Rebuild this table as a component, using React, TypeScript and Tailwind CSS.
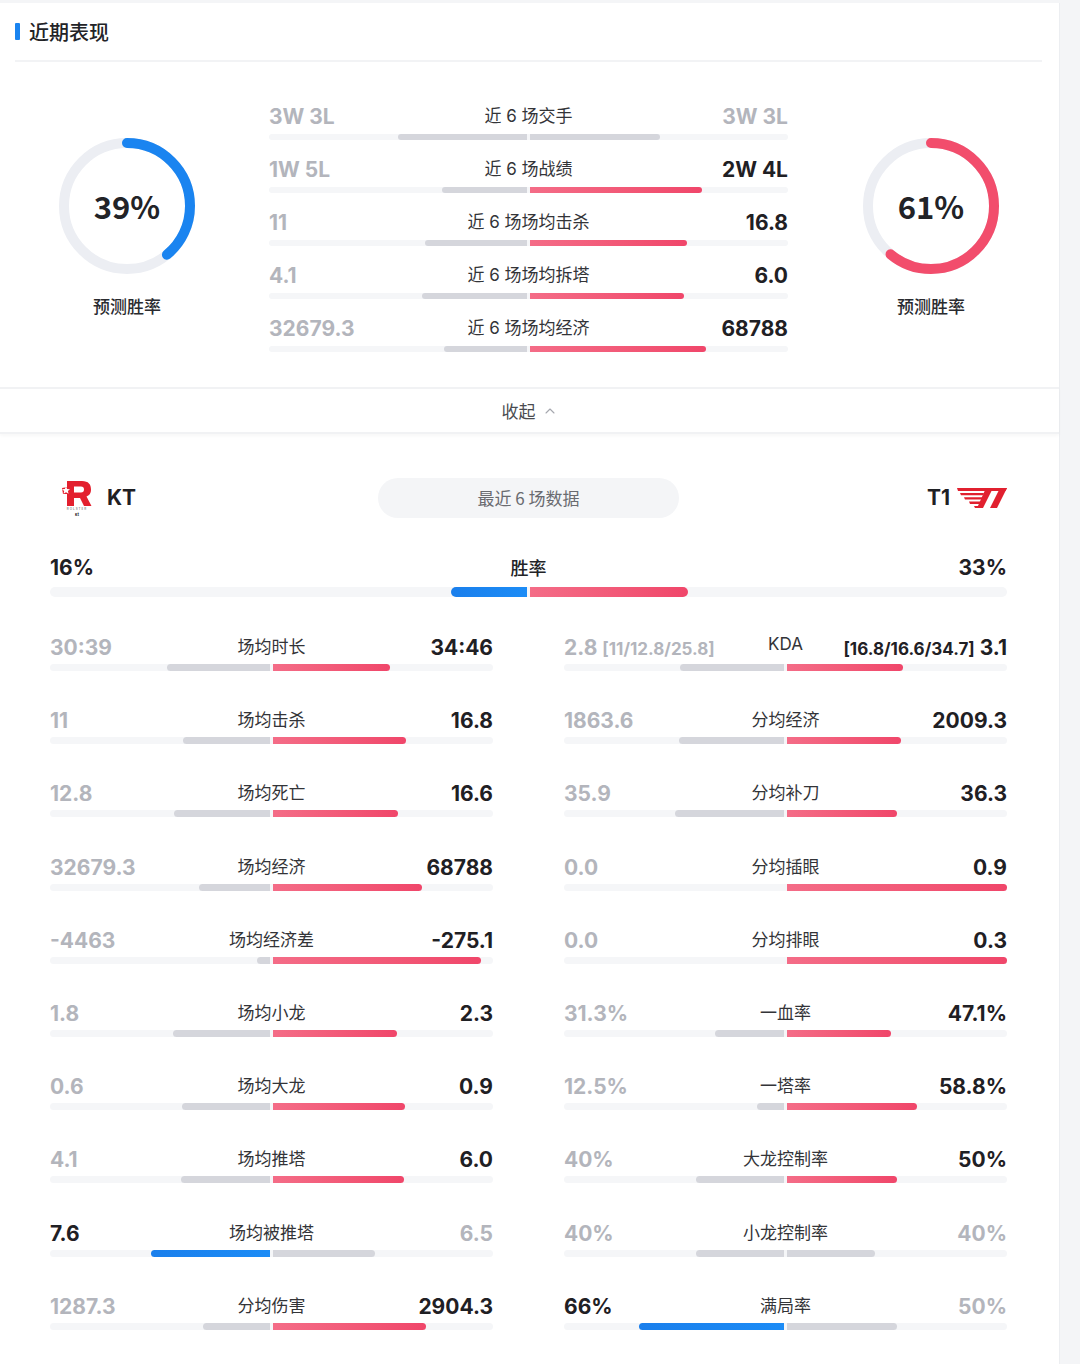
import { ChevronUp } from 'lucide-react';

type Side = 'l' | 'r' | 'none' | 'both';

interface StatRow {
  l: string;
  label: string;
  r: string;
  lw: number;
  rw: number;
  win: Side;
}

const GRAY_BAR = 'bg-[#d5d6dc]';
const PINK_BAR = 'bg-linear-to-r from-[#f46c87] to-[#f0466a]';
const BLUE_BAR = 'bg-linear-to-r from-[#1a7fec] to-[#1c8cf6]';
const DARK = 'text-[#1f2024]';
const MUTED = 'text-[#b3b5bc]';

const recent: StatRow[] = [
  { l: '3W 3L', label: '近 6 场交手', r: '3W 3L', lw: 129, rw: 130, win: 'none' },
  { l: '1W 5L', label: '近 6 场战绩', r: '2W 4L', lw: 85, rw: 172, win: 'r' },
  { l: '11', label: '近 6 场场均击杀', r: '16.8', lw: 102, rw: 157, win: 'r' },
  { l: '4.1', label: '近 6 场场均拆塔', r: '6.0', lw: 105, rw: 154, win: 'r' },
  { l: '32679.3', label: '近 6 场场均经济', r: '68788', lw: 83, rw: 176, win: 'r' },
];

const leftStats: StatRow[] = [
  { l: '30:39', label: '场均时长', r: '34:46', lw: 103, rw: 117, win: 'r' },
  { l: '11', label: '场均击杀', r: '16.8', lw: 87, rw: 133, win: 'r' },
  { l: '12.8', label: '场均死亡', r: '16.6', lw: 96, rw: 125, win: 'r' },
  { l: '32679.3', label: '场均经济', r: '68788', lw: 71, rw: 149, win: 'r' },
  { l: '-4463', label: '场均经济差', r: '-275.1', lw: 13, rw: 208, win: 'r' },
  { l: '1.8', label: '场均小龙', r: '2.3', lw: 97, rw: 124, win: 'r' },
  { l: '0.6', label: '场均大龙', r: '0.9', lw: 88, rw: 132, win: 'r' },
  { l: '4.1', label: '场均推塔', r: '6.0', lw: 89, rw: 131, win: 'r' },
  { l: '7.6', label: '场均被推塔', r: '6.5', lw: 119, rw: 102, win: 'l' },
  { l: '1287.3', label: '分均伤害', r: '2904.3', lw: 67, rw: 153, win: 'r' },
];

const rightStats: StatRow[] = [
  { l: '2.8|[11/12.8/25.8]', label: 'KDA', r: '[16.8/16.6/34.7]|3.1', lw: 104, rw: 116, win: 'r' },
  { l: '1863.6', label: '分均经济', r: '2009.3', lw: 105, rw: 114, win: 'r' },
  { l: '35.9', label: '分均补刀', r: '36.3', lw: 109, rw: 110, win: 'r' },
  { l: '0.0', label: '分均插眼', r: '0.9', lw: 0, rw: 220, win: 'r' },
  { l: '0.0', label: '分均排眼', r: '0.3', lw: 0, rw: 220, win: 'r' },
  { l: '31.3%', label: '一血率', r: '47.1%', lw: 69, rw: 104, win: 'r' },
  { l: '12.5%', label: '一塔率', r: '58.8%', lw: 27, rw: 130, win: 'r' },
  { l: '40%', label: '大龙控制率', r: '50%', lw: 88, rw: 110, win: 'r' },
  { l: '40%', label: '小龙控制率', r: '40%', lw: 88, rw: 88, win: 'none' },
  { l: '66%', label: '满局率', r: '50%', lw: 145, rw: 110, win: 'l' },
];

function Bar({ lw, rw, win, h = 'h-[7px]' }: { lw: number; rw: number; win: Side; h?: string }) {
  const lColor = win === 'l' || win === 'both' ? BLUE_BAR : GRAY_BAR;
  const rColor = win === 'r' || win === 'both' ? PINK_BAR : GRAY_BAR;
  return (
    <div className={`flex ${h} rounded-full bg-[#f5f6f8]`}>
      <div className="flex flex-1 justify-end pr-[1.5px]">
        {lw > 0 && <div className={`h-full rounded-l-full rounded-r-[1px] ${lColor}`} style={{ width: lw }} />}
      </div>
      <div className="flex flex-1 justify-start pl-[1.5px]">
        {rw > 0 && <div className={`h-full rounded-r-full rounded-l-[1px] ${rColor}`} style={{ width: rw }} />}
      </div>
    </div>
  );
}

function Value({ text, dark, align }: { text: string; dark: boolean; align: 'l' | 'r' }) {
  const color = dark ? DARK : MUTED;
  if (text.includes('|')) {
    const [a, b] = text.split('|');
    return align === 'l' ? (
      <span className={`whitespace-nowrap font-bold ${color}`}>
        <span className="text-[21px]">{a}</span>
        <span className="ml-[5px] text-[17px]">{b}</span>
      </span>
    ) : (
      <span className={`whitespace-nowrap font-bold ${color}`}>
        <span className="text-[17px]">{a}</span>
        <span className="ml-[5px] text-[21px]">{b}</span>
      </span>
    );
  }
  return <span className={`whitespace-nowrap text-[21px] font-bold ${color}`}>{text}</span>;
}

function GridRow({ row }: { row: StatRow }) {
  return (
    <div>
      <div className="grid h-[28px] grid-cols-[1fr_auto_1fr] items-center font-['Inter','Noto_Sans_CJK_SC',sans-serif]">
        <div className="text-left">
          <Value text={row.l} dark={row.win === 'l'} align="l" />
        </div>
        <div className={`px-2 text-[17px] text-[#333438] ${row.label === 'KDA' ? '-mt-[6px]' : ''}`}>{row.label}</div>
        <div className="text-right">
          <Value text={row.r} dark={row.win === 'r'} align="r" />
        </div>
      </div>
      <div className="mt-[4px]">
        <Bar lw={row.lw} rw={row.rw} win={row.win} />
      </div>
    </div>
  );
}

function Donut({ pct, color }: { pct: number; color: string }) {
  const r = 63;
  const c = 2 * Math.PI * r;
  return (
    <div className="flex flex-col items-center">
      <div className="relative h-[138px] w-[138px]">
        <svg width="138" height="138" viewBox="0 0 138 138" className="-rotate-90">
          <circle cx="69" cy="69" r={r} fill="none" stroke="#eceef3" strokeWidth="10" />
          <circle
            cx="69"
            cy="69"
            r={r}
            fill="none"
            stroke={color}
            strokeWidth="10"
            strokeLinecap="round"
            strokeDasharray={`${(pct / 100) * c} ${c}`}
          />
        </svg>
        <div className="absolute inset-0 flex items-center justify-center text-[31px] font-bold text-[#222327]">
          {pct}%
        </div>
      </div>
      <div className="mt-[18px] text-[17px] font-medium text-[#2a2b2f]">预测胜率</div>
    </div>
  );
}

function KtLogo() {
  return (
    <svg width="34" height="38" viewBox="0 0 34 38">
      <path
        fillRule="evenodd"
        fill="#e3202e"
        d="M7 2 H22 C28.5 2 31 5.5 31 10.5 C31 14.5 29 16.5 26.5 17.5 L31.5 27 H24 L20 19 H14 V27 H7 Z M14 7.5 V13.5 H21 C23 13.5 24 12.5 24 10.5 C24 8.5 23 7.5 21 7.5 Z"
      />
      <polygon fill="#e3202e" points="2,9 8,8 8,15 3,15" />
      <polygon fill="#ffffff" points="6,7.5 7.2,10 10,10.2 7.9,12 8.6,14.8 6,13.3 3.5,14.8 4.2,12 2,10.2 4.8,10" />
      <text x="17" y="31" textAnchor="middle" fontSize="3" fill="#555" fontFamily="Inter, sans-serif" letterSpacing="1">
        ROLSTER
      </text>
      <text x="17" y="36.5" textAnchor="middle" fontSize="4" fontWeight="700" fill="#222" fontFamily="Inter, sans-serif">
        kt
      </text>
    </svg>
  );
}

function T1Logo() {
  return (
    <svg width="50" height="22" viewBox="0 0 50 22">
      <polygon fill="#e1202f" points="0,1 50,1 48.5,4 1,4" />
      <polygon fill="#e1202f" points="3,6 27,6 26,8.3 4,8.3" />
      <polygon fill="#e1202f" points="7,10.3 26,10.3 25,12.6 8,12.6" />
      <polygon fill="#e1202f" points="12,14.6 24,14.6 23,16.9 13,16.9" />
      <polygon fill="#e1202f" points="17,18.9 22,18.9 21,21 18,21" />
      <polygon fill="#e1202f" points="29,1 36,1 26,21 20,21" />
      <polygon fill="#e1202f" points="43,1 50,1 40,21 33,21" />
    </svg>
  );
}

export default function App() {
  return (
    <div className="min-h-[1364px] w-[1080px] bg-[#f4f5f7] pt-[3px] font-['Noto_Sans_CJK_SC',sans-serif]">
      <div className="min-h-[1361px] w-[1060px] border-r border-[#eceef1] bg-white">
        {/* header */}
        <div className="flex h-[57px] items-center px-[15px]">
          <div className="h-[17px] w-[5px] rounded-[1px] bg-[#1a84f0]" />
          <div className="ml-[9px] text-[20px] font-medium text-[#222327]">近期表现</div>
        </div>
        <div className="ml-[15px] mr-[17px] h-[2px] bg-[#f2f3f5]" />

        {/* recent summary */}
        <div className="flex h-[325px] items-start pl-[58px] pt-[42px]">
          <div className="mt-[33px] w-[138px]">
            <Donut pct={39} color="#1a84f0" />
          </div>
          <div className="ml-[73px] flex w-[519px] flex-col gap-[17px] font-['Inter','Noto_Sans_CJK_SC',sans-serif]">
            {recent.map((row) => (
              <div key={row.label}>
                <div className="relative flex h-[26px] items-center justify-between">
                  <span className={`text-[21px] font-bold ${row.win === 'l' ? DARK : MUTED}`}>{row.l}</span>
                  <span className="absolute left-1/2 -translate-x-1/2 text-[17px] text-[#333438]">{row.label}</span>
                  <span className={`text-[21px] font-bold ${row.win === 'r' ? DARK : MUTED}`}>{row.r}</span>
                </div>
                <div className="mt-[4px]">
                  <Bar lw={row.lw} rw={row.rw} win={row.win} h="h-[6px]" />
                </div>
              </div>
            ))}
          </div>
          <div className="ml-[74px] mt-[33px] w-[138px]">
            <Donut pct={61} color="#f24d6c" />
          </div>
        </div>

        {/* collapse */}
        <div className="flex h-[47px] items-center justify-center border-y-2 border-[#f1f2f4] shadow-[0_2px_3px_rgba(0,0,0,0.03)]">
          <span className="text-[17px] text-[#4a4b50]">收起</span>
          <ChevronUp className="ml-[6px] h-[16px] w-[16px] text-[#a5a7ae]" strokeWidth={1.6} />
        </div>

        {/* detail */}
        <div className="pl-[50px] pr-[52px] pt-[44px]">
          <div className="grid h-[40px] grid-cols-[1fr_auto_1fr] items-center">
            <div className="flex items-center pl-[10px]">
              <KtLogo />
              <span className="ml-[13px] font-['Inter',sans-serif] text-[21px] font-bold text-[#1f2024]">KT</span>
            </div>
            <div className="flex h-[40px] w-[301px] items-center justify-center rounded-full bg-[#f4f5f7] text-[17px] text-[#6a6b70]">
              最近 6 场数据
            </div>
            <div className="flex items-center justify-end">
              <span className="mr-[7px] font-['Inter',sans-serif] text-[21px] font-bold text-[#1f2024]">T1</span>
              <T1Logo />
            </div>
          </div>

          <div className="mt-[36px]">
            <div className="relative flex h-[28px] items-center justify-between font-['Inter','Noto_Sans_CJK_SC',sans-serif]">
              <span className="text-[21px] font-bold text-[#1f2024]">16%</span>
              <span className="absolute left-1/2 -translate-x-1/2 text-[18px] font-medium text-[#222327]">胜率</span>
              <span className="text-[21px] font-bold text-[#1f2024]">33%</span>
            </div>
            <div className="mt-[5px]">
              <Bar lw={76} rw={158} win="both" h="h-[10px]" />
            </div>
          </div>

          <div className="mt-[35px] grid grid-cols-2 gap-x-[71px] gap-y-[34.2px]">
            {leftStats.flatMap((row, i) => [
              <GridRow key={`l${i}`} row={row} />,
              <GridRow key={`r${i}`} row={rightStats[i]} />,
            ])}
          </div>
        </div>
      </div>
    </div>
  );
}
